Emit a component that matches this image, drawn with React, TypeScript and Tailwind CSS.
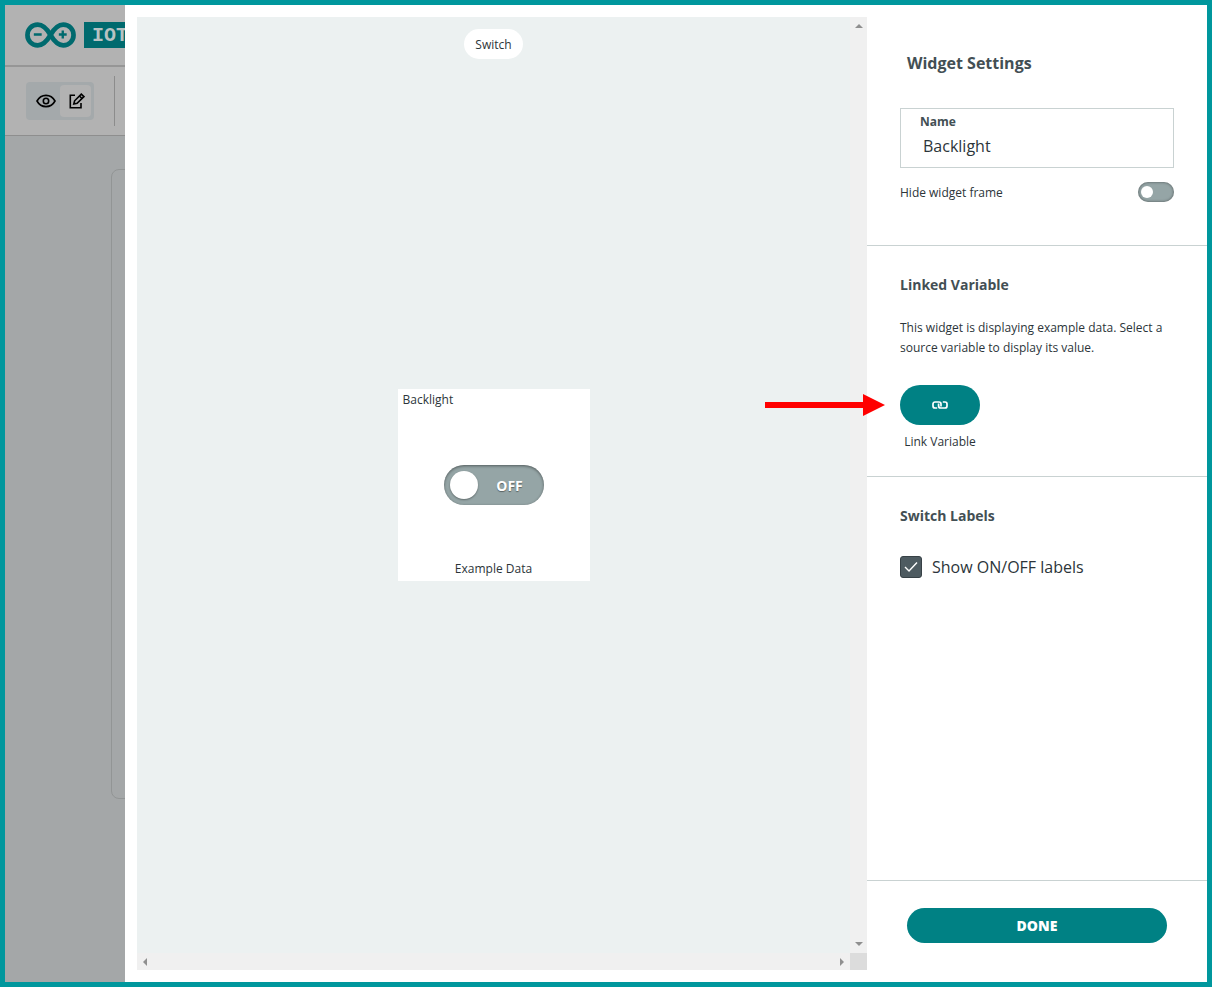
import { useState } from 'react';
import type { ReactNode } from 'react';

interface ScrollArrowProps {
  label: string;
  points: string;
}

interface SectionProps {
  title: string;
  className?: string;
  children: ReactNode;
}

const ARROWS = {
  up: '8,6 12,10 4,10',
  down: '4,5 12,5 8,9',
  left: '9,4 9,12 5,8',
  right: '6,4 10,8 6,12'
};

function ScrollArrow({ label, points }: ScrollArrowProps) {
  return (
    <button type="button" aria-label={label} className="flex size-[17px] items-center justify-center">
      <svg className="size-4" viewBox="0 0 16 16" fill="#8f8f8f">
        <polygon points={points} />
      </svg>
    </button>
  );
}

function ArduinoLogo() {
  return (
    <svg className="h-[26px] w-[51px] shrink-0" viewBox="0 0 52 26" fill="none" stroke="#006a6e">
      <path
        d="M26 13 C22.5 7 18.5 2.5 13 2.5 C7 2.5 2.5 7 2.5 13 C2.5 19 7 23.5 13 23.5 C18.5 23.5 22.5 19 26 13 C29.5 7 33.5 2.5 39 2.5 C45 2.5 49.5 7 49.5 13 C49.5 19 45 23.5 39 23.5 C33.5 23.5 29.5 19 26 13 Z"
        strokeWidth="4.8"
      />
      <path d="M9 12.5h8M34.5 12.5h8M38.5 8.5v8" strokeWidth="2.4" />
    </svg>
  );
}

function DashboardStrip() {
  return (
    <aside className="flex w-[120px] shrink-0 flex-col overflow-hidden bg-[#a4a7a8]">
      <header className="flex h-[62px] shrink-0 items-center gap-2 border-b-2 border-[#969696] bg-[#b2b2b2] pl-5">
        <ArduinoLogo />
        <span className="h-[26px] shrink-0 bg-[#006a6e] pr-3 pl-2 font-['Liberation_Mono',monospace] text-xl leading-7 font-bold text-[#b8c2c2]">
          IOT
        </span>
      </header>

      <div className="flex h-[69px] shrink-0 items-center gap-5 border-b border-[#8e8e8e] bg-[#b2b2b2] pl-[21px]">
        <div className="flex h-[38px] w-[68px] shrink-0 items-center rounded bg-[#a4a9ab] p-[3px]">
          <button type="button" aria-label="View" className="flex h-8 w-[31px] items-center justify-center pl-[3px]">
            <svg className="size-5" viewBox="0 0 20 20" fill="none" stroke="#000" strokeWidth="1.6">
              <path d="M1 10C3 6.3 6 4.4 10 4.4S17 6.3 19 10C17 13.7 14 15.6 10 15.6S3 13.7 1 10Z" />
              <circle cx="10" cy="10" r="2.7" />
            </svg>
          </button>
          <button type="button" aria-label="Edit" className="flex h-8 w-[31px] items-center justify-center rounded bg-[#b2b2b2] pl-[3px]">
            <svg className="size-4" viewBox="0 0 16 16" fill="none" stroke="#000" strokeWidth="1.6">
              <path d="M6 2.3H1.3V14.7H12V10" />
              <path d="M4.8 11L5.6 7.8L12.3 1.1L14.9 3.6L8.1 10.3Z" />
              <path d="M10.4 3L13 5.5" />
            </svg>
          </button>
        </div>
        <div className="h-[50px] w-px shrink-0 bg-[#8c8c8c]" />
      </div>

      <div className="mt-[33px] ml-[106px] h-[630px] w-40 rounded-lg border border-[#929595]" />
    </aside>
  );
}

function WidgetPreview() {
  const [on, setOn] = useState(false);

  return (
    <div className="flex h-48 w-48 flex-col bg-white text-xs text-[#2c353a]">
      <p className="px-[5px] pt-0.5 leading-[18px]">Backlight</p>
      <div className="flex flex-1 items-center justify-center">
        <button
          type="button"
          role="switch"
          aria-checked={on}
          aria-label="Backlight"
          onClick={() => setOn(!on)}
          className={`flex h-10 w-[100px] items-center rounded-full px-1.5 shadow-[inset_0_1px_3px_rgba(0,0,0,0.45)] ${
            on ? 'flex-row-reverse bg-[#008184]' : 'bg-[#95a5a6]'
          }`}
        >
          <span className="size-7 shrink-0 rounded-full bg-white shadow-[0_1px_2px_rgba(0,0,0,0.35)]" />
          <span className="flex-1 pt-0.5 pl-1 text-center text-sm font-bold text-white [text-shadow:0_1px_1px_rgba(0,0,0,0.4)]">
            {on ? 'ON' : 'OFF'}
          </span>
        </button>
      </div>
      <p className="pb-[3px] text-center leading-[18px]">Example Data</p>
    </div>
  );
}

function PreviewCanvas() {
  return (
    <section className="my-3 ml-3 grid flex-1 grid-cols-[1fr_17px] grid-rows-[1fr_17px] bg-[#f0f0f0]">
      <div className="grid grid-rows-[1fr_auto_1fr] justify-items-center bg-[#ecf1f1]">
        <span className="mt-3 h-[30px] self-start rounded-full bg-white px-[11px] text-xs leading-8 text-[#2c353a]">
          Switch
        </span>
        <WidgetPreview />
      </div>
      <div className="flex flex-col justify-between">
        <ScrollArrow label="Scroll up" points={ARROWS.up} />
        <ScrollArrow label="Scroll down" points={ARROWS.down} />
      </div>
      <div className="flex justify-between">
        <ScrollArrow label="Scroll left" points={ARROWS.left} />
        <ScrollArrow label="Scroll right" points={ARROWS.right} />
      </div>
      <div className="bg-[#dcdcdc]" />
    </section>
  );
}

function Section({ title, className = '', children }: SectionProps) {
  return (
    <section className={`px-[33px] pt-[29px] ${className}`}>
      <h3 className="text-sm leading-5 font-bold text-[#434f54]">{title}</h3>
      {children}
    </section>
  );
}

function SettingsPanel() {
  const [name, setName] = useState('Backlight');
  const [hideFrame, setHideFrame] = useState(false);
  const [showLabels, setShowLabels] = useState(true);

  return (
    <aside className="flex w-[340px] shrink-0 flex-col text-[#2c353a]">
      <div className="border-b border-[#c9d2d2] px-[33px] pt-[46px] pb-[43px]">
        <h2 className="px-[7px] text-base leading-6 font-bold text-[#434f54]">Widget Settings</h2>
        <div className="mt-[33px] flex h-[60px] flex-col border border-[#c9d2d2] px-[19px] pt-1">
          <label htmlFor="widget-name" className="text-xs leading-[18px] font-bold text-[#434f54]">
            Name
          </label>
          <input
            id="widget-name"
            value={name}
            onChange={e => setName(e.target.value)}
            className="mt-[5px] h-5 px-[3px] text-base leading-5 text-[#2c353a] outline-none"
          />
        </div>
        <div className="mt-3.5 flex h-5 items-center justify-between">
          <label htmlFor="hide-frame" className="pt-0.5 text-xs">
            Hide widget frame
          </label>
          <input
            id="hide-frame"
            type="checkbox"
            role="switch"
            checked={hideFrame}
            onChange={e => setHideFrame(e.target.checked)}
            className="flex h-5 w-9 appearance-none items-center rounded-full bg-[#95a5a6] px-[3px] shadow-[inset_0_0_3px_rgba(0,0,0,0.5)] before:size-3 before:rounded-full before:bg-white checked:justify-end checked:bg-[#008184]"
          />
        </div>
      </div>

      <Section title="Linked Variable" className="border-b border-[#c9d2d2] pb-6">
        <p className="mt-[23px] text-xs leading-5">
          This widget is displaying example data. Select a source variable to display its value.
        </p>
        <div className="relative mt-[27px] flex w-20 flex-col items-center">
          <svg className="absolute top-[9px] right-full mr-[15px] h-[22px] w-[120px]" viewBox="0 0 120 22" fill="#f00">
            <path d="M0 8H98V0L120 11L98 22V14H0Z" />
          </svg>
          <button
            type="button"
            aria-labelledby="link-caption"
            className="flex h-10 w-full items-center justify-center rounded-full bg-[#008184]"
          >
            <svg className="h-2 w-4" viewBox="0 0 16 8" fill="none" stroke="#fff" strokeWidth="1.7">
              <path d="M5.2 7H3A2 2 0 0 1 1 5V3A2 2 0 0 1 3 1H7A2 2 0 0 1 9 3V5.4" />
              <path d="M10.8 1H13A2 2 0 0 1 15 3V5A2 2 0 0 1 13 7H8.6A2 2 0 0 1 6.6 5V2.6" />
            </svg>
          </button>
          <span id="link-caption" className="mt-[7px] text-xs leading-5 whitespace-nowrap">
            Link Variable
          </span>
        </div>
      </Section>

      <Section title="Switch Labels" className="flex-1">
        <label className="mt-[29px] flex items-center gap-2.5 text-base leading-6">
          <span className="grid size-[22px]">
            <input
              type="checkbox"
              checked={showLabels}
              onChange={e => setShowLabels(e.target.checked)}
              className="peer col-start-1 row-start-1 size-[22px] appearance-none rounded-[3px] border border-[#374146] checked:bg-[#4e5b61]"
            />
            <svg
              className="pointer-events-none invisible col-start-1 row-start-1 size-[22px] peer-checked:visible"
              viewBox="0 0 22 22"
              fill="none"
              stroke="#fff"
              strokeWidth="1.4"
            >
              <path d="M5 11L9 15L17 6.5" />
            </svg>
          </span>
          Show ON/OFF labels
        </label>
      </Section>

      <footer className="border-t border-[#c9d2d2] px-10 pt-[27px] pb-[39px]">
        <button type="button" className="h-[35px] w-full rounded-full bg-[#008184] text-sm font-extrabold text-white">
          DONE
        </button>
      </footer>
    </aside>
  );
}

export default function App() {
  return (
    <div className="flex min-h-screen border-[5px] border-[#00979d] bg-white font-['Open_Sans','Noto_Sans',sans-serif]">
      <DashboardStrip />
      <main className="flex flex-1">
        <PreviewCanvas />
        <SettingsPanel />
      </main>
    </div>
  );
}
